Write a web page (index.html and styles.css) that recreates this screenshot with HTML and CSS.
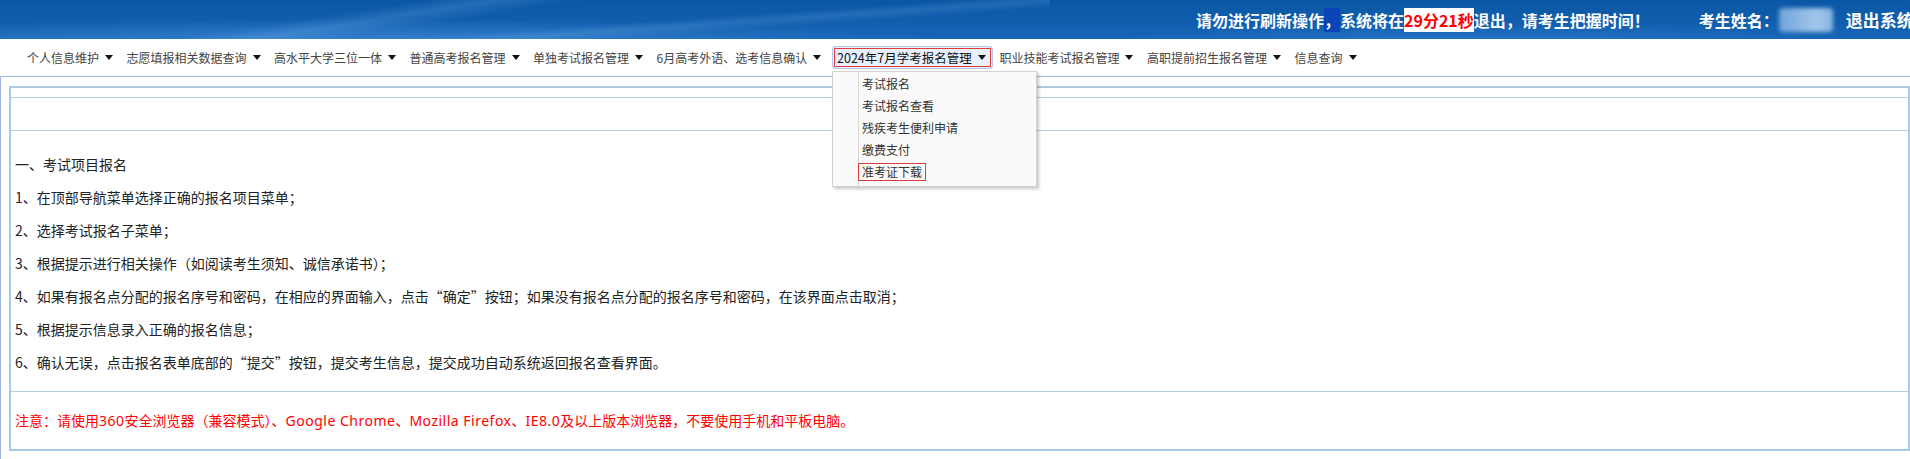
FILE: index.html
```html
<!DOCTYPE html>
<html lang="zh-CN">
<head>
<meta charset="utf-8">
<title>考生报名系统</title>
<link rel="stylesheet" href="styles.css">
</head>
<body>
<div class="page">
  <header class="topbar">
    <div class="notice">请勿进行刷新操作<span class="sel">，</span>系统将在<span class="timer">29分21秒</span>退出，请考生把握时间！</div>
    <div class="user">考生姓名：<span class="blur-name"></span></div>
    <div class="logout">退出系统</div>
  </header>

  <nav class="menu">
    <div class="item">个人信息维护<i class="caret"></i></div>
    <div class="item">志愿填报相关数据查询<i class="caret"></i></div>
    <div class="item">高水平大学三位一体<i class="caret"></i></div>
    <div class="item">普通高考报名管理<i class="caret"></i></div>
    <div class="item">单独考试报名管理<i class="caret"></i></div>
    <div class="item">6月高考外语、选考信息确认<i class="caret"></i></div>
    <div class="item active">2024年7月学考报名管理<i class="caret"></i>
      <div class="dropdown">
        <div class="dd-item">考试报名</div>
        <div class="dd-item">考试报名查看</div>
        <div class="dd-item">残疾考生便利申请</div>
        <div class="dd-item">缴费支付</div>
        <div class="dd-item"><span class="mark">准考证下载</span></div>
      </div>
    </div>
    <div class="item">职业技能考试报名管理<i class="caret"></i></div>
    <div class="item">高职提前招生报名管理<i class="caret"></i></div>
    <div class="item">信息查询<i class="caret"></i></div>
  </nav>

  <main class="frame">
    <div class="panel">
      <div class="row r1"></div>
      <div class="row r2"></div>
      <div class="row r3">
        <p>一、考试项目报名</p>
        <p>1、在顶部导航菜单选择正确的报名项目菜单；</p>
        <p>2、选择考试报名子菜单；</p>
        <p>3、根据提示进行相关操作（如阅读考生须知、诚信承诺书）；</p>
        <p>4、如果有报名点分配的报名序号和密码，在相应的界面输入，点击“确定”按钮；如果没有报名点分配的报名序号和密码，在该界面点击取消；</p>
        <p>5、根据提示信息录入正确的报名信息；</p>
        <p>6、确认无误，点击报名表单底部的“提交”按钮，提交考生信息，提交成功自动系统返回报名查看界面。</p>
      </div>
      <div class="row r4">
        <p class="warn">注意：请使用<span class="lat">360</span>安全浏览器（兼容模式）、<span class="lat">Google Chrome</span>、<span class="lat">Mozilla Firefox</span>、<span class="lat">IE8.0</span>及以上版本浏览器，不要使用手机和平板电脑。</p>
      </div>
    </div>
  </main>
</div>
</body>
</html>
```

FILE: styles.css
```css
* { box-sizing: border-box; }
html, body { margin: 0; padding: 0; background: #fff; overflow: hidden; }
body {
  font-family: "Microsoft YaHei", "Noto Sans CJK SC", "Noto Sans", sans-serif;
  color: #222;
}
.page { width: 1930px; }

/* ---------- header ---------- */
.topbar {
  height: 39px;
  display: flex;
  align-items: center;
  padding-left: 1196px;
  color: #fff;
  font-weight: bold;
  font-size: 16px;
  background:
    linear-gradient(171deg, rgba(255,255,255,0) 0 34%, rgba(170,210,250,0.16) 40%, rgba(255,255,255,0) 47%) 0 0 / 1000px 39px no-repeat,
    linear-gradient(176deg, rgba(255,255,255,0) 0 55%, rgba(170,210,250,0.14) 62%, rgba(255,255,255,0) 70%) 150px 0 / 900px 39px no-repeat,
    radial-gradient(ellipse 820px 36px at 360px 46px, rgba(70,145,222,0.75), rgba(70,145,222,0) 75%),
    radial-gradient(ellipse 520px 26px at 1480px 44px, rgba(55,135,215,0.55), rgba(55,135,215,0) 75%),
    linear-gradient(180deg, #0a57a5 0%, #115eae 55%, #1766b5 100%);
}
.notice { white-space: nowrap; }
.sel { background: #0a44b6; }
.timer { background: #fff; color: #f00; }
.user { margin-left: 49px; display: flex; align-items: center; white-space: nowrap; }
.blur-name {
  display: inline-block;
  width: 54px;
  height: 24px;
  margin-left: 0;
  background: linear-gradient(90deg, #6fa4d8, #8db9e3 40%, #a3c6ea 70%, #86b3df);
  filter: blur(2px);
  border-radius: 4px;
}
.logout { margin-left: 13px; font-size: 17px; white-space: nowrap; }

/* ---------- menu ---------- */
.menu {
  height: 37px;
  display: flex;
  align-items: center;
  padding-left: 20.25px;
  font-size: 12px;
  color: #444;
}
.item {
  position: relative;
  display: flex;
  align-items: center;
  padding: 0 6.75px;
  height: 23px;
  white-space: nowrap;
}
.caret {
  display: inline-block;
  width: 0; height: 0;
  margin-left: 6px;
  border-left: 4px solid transparent;
  border-right: 4px solid transparent;
  border-top: 5px solid #111;
}
.item.active {
  margin-left: 4px;
  padding: 0 6px 0 4px;
  color: #111;
  font-size: 12.5px;
  border: 1px solid #b3caec;
  border-radius: 3px;
  background: #e8f0fc;
  box-shadow: inset 0 0 0 1px #e8f0fc, inset 0 0 0 2px #e53a3a;
}

.dropdown {
  position: absolute;
  top: 24px;
  left: -1px;
  width: 205px;
  padding: 1px 0 3px 0;
  background: #fafafa linear-gradient(90deg, transparent 0 25px, #d7d7d7 25px 26px, transparent 26px);
  border: 1px solid #d2d2d2;
  box-shadow: 2px 2px 3px rgba(0,0,0,0.22);
  font-size: 12px;
  color: #333;
  z-index: 5;
}
.dd-item {
  height: 22px;
  line-height: 22px;
  padding-left: 29px;
}
.mark {
  display: inline-block;
  height: 18px;
  line-height: 16px;
  margin-left: -4px;
  padding: 0 3px;
  border: 1px solid #e23b3b;
}

/* ---------- content ---------- */
.frame {
  border-top: 1px solid #9db6e2;
  border-left: 1px solid #9db6e2;
  padding: 9px 0 0 8px;
  height: 400px;
}
.panel {
  width: 1901px;
  border: 2px solid #abc9e1;
}
.row { border-bottom: 1px solid #b3cfe5; }
.row:last-child { border-bottom: 0; }
.r1 { height: 10px; }
.r2 { height: 33px; }
.r3 { padding: 17px 4px 12px 4px; }
.r3 p {
  margin: 0;
  height: 33px;
  line-height: 33px;
  font-size: 14px;
  color: #222;
  white-space: nowrap;
}
.r4 {
  height: 57px;
  display: flex;
  align-items: center;
  padding: 0 4px 1px 4px;
}
.warn { margin: 0; font-size: 14px; color: #f00; white-space: nowrap; }
.lat { font-family: "Noto Sans", "Open Sans", sans-serif; letter-spacing: 0.5px; }
```
